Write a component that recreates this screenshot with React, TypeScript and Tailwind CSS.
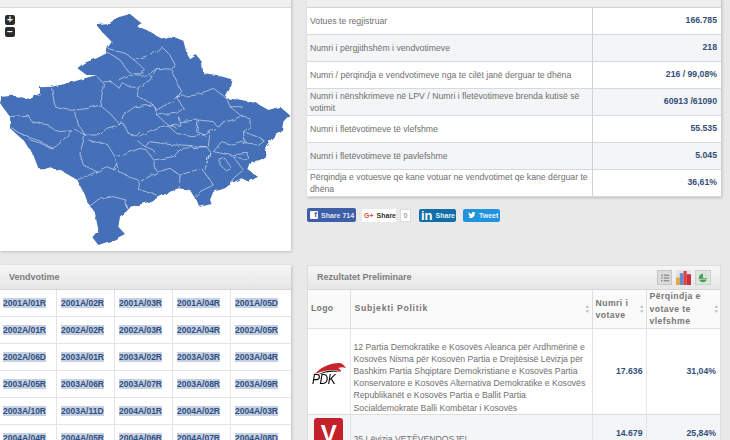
import React from 'react';

const summary = [
  ['Votues te regjistruar', '166.785'],
  ['Numri i përgjithshëm i vendvotimeve', '218'],
  ['Numri / përqindja e vendvotimeve nga te cilët janë derguar te dhëna', '216 / 99,08%'],
  ['Numri i nënshkrimeve në LPV / Numri i fletëvotimeve brenda kutisë së votimit', '60913 /61090'],
  ['Numri i fletëvotimeve të vlefshme', '55.535'],
  ['Numri i fletëvotimeve të pavlefshme', '5.045'],
  ['Përqindja e votuesve qe kane votuar ne vendvotimet qe kane dërguar te dhëna', '36,61%'],
];

const stations = [
  ['2001A/01R', '2001A/02R', '2001A/03R', '2001A/04R', '2001A/05D'],
  ['2002A/01R', '2002A/02R', '2002A/03R', '2002A/04R', '2002A/05R'],
  ['2002A/06D', '2003A/01R', '2003A/02R', '2003A/03R', '2003A/04R'],
  ['2003A/05R', '2003A/06R', '2003A/07R', '2003A/08R', '2003A/09R'],
  ['2003A/10R', '2003A/11D', '2004A/01R', '2004A/02R', '2004A/03R'],
  ['2004A/04R', '2004A/05R', '2004A/06R', '2004A/07R', '2004A/08D'],
];

const outline =
  '287,73 330,68 355,52 390,42 405,55 425,70 410,78 440,90 470,108 490,118 520,110 550,122 560,160 570,178 590,165 605,185 610,220 650,225 694,238 688,270 676,295 725,300 770,310 805,330 840,320 868,345 850,365 845,395 820,410 795,440 800,465 780,480 755,485 745,510 775,530 745,545 725,535 695,550 675,565 640,575 630,600 635,612 600,620 588,600 570,570 535,565 510,575 470,595 435,610 385,622 360,650 355,680 375,702 340,720 295,735 277,712 295,690 285,640 265,610 232,540 180,510 150,505 115,505 100,465 75,425 30,385 30,350 0,310 5,290 40,287 90,297 120,280 120,262 155,260 205,250 255,235 290,225 260,225 232,205 250,190 290,175 320,160 322,145 335,125 310,100';

const borders = [
  '322,145 375,160 400,178 455,165 485,140 510,165 522,190 515,215 530,245 545,275 530,295',
  '322,158 360,180 385,215 420,225 430,205 400,178',
  '355,240 385,225 415,228 440,228 470,205 515,208',
  '470,205 450,240 415,262 412,290 455,310 470,330 515,305 540,280',
  '290,228 310,250 305,295 300,315 265,325 225,330 165,320 155,265',
  '310,245 335,245 358,265 365,250 410,265',
  '300,315 335,345 360,375 370,345 405,320 460,315',
  '225,330 235,375 255,405 300,405 320,385 370,370 385,400 410,408 420,395',
  '30,350 85,345 95,365 145,375 170,395 215,392 185,425 160,445 100,415 60,400 35,385',
  '85,415 130,435 160,448',
  '225,390 255,405 240,460 250,495 290,515 320,500 345,510',
  '265,420 300,430 320,430 345,470 350,490 340,510',
  '345,470 370,465 420,445 440,450 460,480 470,515',
  '350,490 355,515 420,545 475,515 510,505 540,525 605,505',
  '232,540 290,515',
  '420,545 415,568 470,585',
  '265,622 295,598 340,590 378,600 380,625',
  '540,525 538,565',
  '605,505 640,555 600,575 585,590',
  '460,480 520,470 545,445 620,440 630,455 620,490 605,505',
  '415,425 435,440 450,425 520,435 545,435 620,440',
  '435,440 460,450 465,460',
  '415,410 465,385 505,375 470,345 465,320',
  '470,345 530,340 550,325 530,290',
  '535,350 540,375 505,378 530,400 575,410 615,405 630,395 645,385',
  '540,365 595,360 640,365 650,378 720,350',
  '530,290 590,285 640,265 680,295 690,320 720,345 750,355 750,380 730,395 735,425 700,435 665,425 640,455',
  '595,360 590,395 615,405',
  '630,395 625,440',
  '690,320 725,320',
  '730,395 770,410 790,420 770,435 735,425',
  '640,455 690,465 745,460 745,480 700,470',
  '700,470 730,510 700,535 695,550',
  '660,480 675,475 695,505 680,512 660,495 660,480',
  '630,455 615,510',
  '510,375 530,385',
];

const KosovoMap = () => (
  <svg viewBox="0 0 900 780" className="w-[300px] h-[260px] shrink-0">
    <defs>
      <filter id="rough" x="-5%" y="-5%" width="110%" height="110%">
        <feTurbulence type="fractalNoise" baseFrequency="0.045" numOctaves="2" seed="4" />
        <feDisplacementMap in="SourceGraphic" scale="13" />
      </filter>
    </defs>
    <g filter="url(#rough)">
      <polygon points={outline} fill="#4470b8" />
      {borders.map((line, i) => (
        <polyline key={i} points={line} fill="none" stroke="#d3dff3" strokeWidth="2" strokeLinejoin="round" />
      ))}
    </g>
  </svg>
);

const ShareButtons = () => (
  <div className="flex items-center h-[14px] mt-[11px] text-[7px] font-bold leading-none">
    <div className="flex items-center w-[49px] h-[14px] bg-[#3f5ea8] text-[#dfe6f5] rounded-[2px] pl-[3px] gap-[3px]">
      <span className="flex items-end justify-end w-[8px] h-[8px] bg-white text-[#3f5ea8] text-[8px] rounded-[1px] pr-[1px]">f</span>
      <span className="whitespace-nowrap">Share 714</span>
    </div>
    <div className="flex items-center w-[34px] h-[13px] bg-white text-[#333333] ml-[6px] pl-[2px] gap-[3px]">
      <span className="text-[#d9503f]">G+</span>
      <span>Share</span>
    </div>
    <div className="flex items-center justify-center w-[11px] h-[13px] bg-white border border-[#dddddd] text-[#777777] font-normal ml-[4px]">0</div>
    <div className="flex items-center w-[37px] h-[13px] bg-[#0f6fa6] text-[#e6f2f8] rounded-[2px] ml-[8px] pl-[2px] gap-[3px]">
      <span className="text-[13px] text-white font-bold">in</span>
      <span>Share</span>
    </div>
    <div className="flex items-center w-[37px] h-[13px] bg-[#2093dc] text-[#e6f5fd] rounded-[2px] ml-[7px] pl-[5px] gap-[3px]">
      <svg viewBox="0 0 24 24" className="w-[8px] h-[8px]" fill="white">
        <path d="M23 5c-.8.4-1.7.6-2.6.7.9-.6 1.6-1.4 2-2.5-.9.5-1.9.9-2.9 1.1A4.6 4.6 0 0 0 11.6 8.5C7.8 8.300 4.400 6.500 2.100 3.700c-1.200 2.100-.6 4.800 1.400 6.100-.7 0-1.400-.2-2-.6 0 2.200 1.600 4.100 3.700 4.600-.7.2-1.400.2-2.100.1.600 1.900 2.300 3.200 4.300 3.200A9.300 9.300 0 0 1 .5 19a13 13 0 0 0 20-11.600c.9-.6 1.700-1.400 2.500-2.400z" />
      </svg>
      <span>Tweet</span>
    </div>
  </div>
);

const ViewIcons = () => (
  <div className="flex items-center gap-[4px] mr-[9px]">
    <div className="flex items-center justify-center w-[15px] h-[15px] bg-[#dcdcdc] border border-[#c4c4c4]">
      <svg viewBox="0 0 12 10" className="w-[10px] h-[8px]" stroke="#4f5f4f" strokeWidth="1">
        <path d="M1 1.500h2M1 5h2M1 8.500h2M4.500 1.500h7M4.500 5h7M4.500 8.500h7" />
      </svg>
    </div>
    <div className="flex items-center justify-center w-[15px] h-[15px] bg-[#e4e4e4]">
      <svg viewBox="0 0 14 13" className="w-[15px] h-[14px]">
        <rect x="0" y="6" width="3.500" height="7" fill="#e5a93f" />
        <rect x="3.500" y="2" width="3.500" height="11" fill="#5f8fd0" />
        <rect x="7" y="0" width="3" height="13" fill="#e0413f" />
        <rect x="10" y="3" width="4" height="10" fill="#c9303a" />
      </svg>
    </div>
    <div className="flex items-center justify-center w-[16px] h-[15px] bg-[#dce6dc] border border-[#c6d2c6]">
      <svg viewBox="0 0 12 12" className="w-[10px] h-[10px]">
        <circle cx="6" cy="6" r="5" fill="#4f9a5b" />
        <path d="M6 6V1a5 5 0 0 1 5 5z" fill="#d8e8d8" />
        <path d="M1 7.500h10" stroke="#d8e8d8" strokeWidth="1" />
      </svg>
    </div>
  </div>
);

const PdkLogo = () => (
  <div className="relative w-[34px] h-[24px] mx-auto">
    <svg viewBox="0 0 34 14" className="absolute left-0 top-0 w-[34px] h-[14px]">
      <path d="M3 12C9 5 18 1 27 1c3 0 5 2 7 5-3-1-5-1-8 0 2 1 3 2 3 4-5-3-14-3-26 2z" fill="#c8222c" />
      <path d="M5 13c7-4 15-6 23-3-8-1-15 0-23 3z" fill="#222222" />
    </svg>
    <span className="absolute left-0 top-[9px] text-[15px] leading-[15px] italic text-black scale-x-[.8] origin-left tracking-[-0.5px]">PDK</span>
  </div>
);

export default function App() {
  return (
    <div className="w-[730px] h-[440px] overflow-hidden bg-[#e9e9ea] font-['Liberation_Sans',Arial,sans-serif] text-[8.7px] text-[#707070]">
      <div className="flex items-start gap-[16px] w-[730px] -mt-[20px]">
        <div className="w-[291px] shrink-0">
          <div className="bg-white shadow-[1px_1px_3px_rgba(0,0,0,0.18)]">
            <div className="h-[28px] bg-[#efefef] border-b border-[#d8d8d8]" />
            <div className="relative h-[243px] overflow-hidden">
              <div className="-mt-[8px]">
                <KosovoMap />
              </div>
              <div className="absolute left-[5px] top-[7px] flex flex-col gap-[2px]">
                <div className="flex items-center justify-center w-[10px] h-[10px] bg-[#2b2b2b] text-white rounded-[2px] text-[10px] font-bold leading-none">+</div>
                <div className="flex items-center justify-center w-[10px] h-[10px] bg-[#2b2b2b] text-white rounded-[2px] text-[10px] font-bold leading-none">−</div>
              </div>
            </div>
          </div>

          <div className="bg-white mt-[14px] shadow-[1px_1px_3px_rgba(0,0,0,0.18)]">
            <div className="flex items-center h-[25px] pl-[9px] pt-[1px] bg-gradient-to-b from-[#f6f6f6] to-[#e6e6e6] border-b border-[#d6d6d6] text-[9px] font-bold text-[#7d7d7d]">Vendvotime</div>
            <div className="grid grid-cols-[57px_58px_58px_58px_60px]">
              {stations.flat().map((code, i) => (
                <div key={code} className={`flex items-center h-[27px] border-b border-[#e2e4e8] ${i % 5 === 0 ? 'pl-[3px]' : 'pl-[4px]'} ${i % 5 === 4 ? '' : 'border-r'}`}>
                  <span className="bg-[#c5d0e2] text-[#2f4f7f] font-bold text-[8.5px] leading-[10px]">{code}</span>
                </div>
              ))}
            </div>
          </div>
        </div>

        <div className="w-[414px] shrink-0">
          <div className="bg-white shadow-[1px_1px_3px_rgba(0,0,0,0.2)]">
            <div className="h-[28px] bg-[#efefef] border-b border-[#d0d4d8]" />
            {summary.map(([label, value], i) => (
              <div key={label} className={`flex h-[27px] border-b border-[#d5dae0] ${i % 2 === 1 ? 'bg-[#f3f5f7]' : 'bg-white'}`}>
                <div className="flex items-center w-[286px] pl-[3px] pr-[1px] border-r border-[#cdd3da] leading-[12px]">{label}</div>
                <div className="flex items-center justify-end flex-1 pr-[4px] font-bold text-[#34507a]">{value}</div>
              </div>
            ))}
          </div>

          <ShareButtons />

          <div className="bg-white mt-[43px] border border-[#dddddd]">
            <div className="flex items-center justify-between h-[24px] pl-[9px] bg-gradient-to-b from-[#f6f6f6] to-[#e6e6e6] border-b border-[#d6d6d6] text-[9px] font-bold text-[#7d7d7d]">
              <span>Rezultatet Preliminare</span>
              <ViewIcons />
            </div>
            <table className="w-[412px] table-fixed border-collapse">
              <colgroup>
                <col className="w-[42px]" />
                <col className="w-[242px]" />
                <col className="w-[54px]" />
                <col className="w-[74px]" />
              </colgroup>
              <thead>
                <tr className="h-[38px] text-left text-[#777777] bg-[#fafafa] border-b border-[#e0e0e0]">
                  <th className="pl-[3px] font-bold tracking-[0.3px] border-r border-[#dddddd]">Logo</th>
                  <th className="relative pl-[4px] font-bold tracking-[0.7px] border-r border-[#dddddd]">Subjekti Politik<span className="absolute right-[1px] top-[14px] text-[5px] leading-[5px] text-[#bbbbbb]">▲<br />▼</span></th>
                  <th className="relative pl-[3px] pr-[10px] font-bold tracking-[0.4px] leading-[12px] border-r border-[#dddddd]">Numri i votave<span className="absolute right-[1px] top-[14px] text-[5px] leading-[5px] text-[#bbbbbb]">▲<br />▼</span></th>
                  <th className="relative pl-[3px] pr-[12px] font-bold tracking-[0.4px] leading-[12.2px]">Përqindja e votave te vlefshme<span className="absolute right-[1px] top-[14px] text-[5px] leading-[5px] text-[#bbbbbb]">▲<br />▼</span></th>
                </tr>
              </thead>
              <tbody>
                <tr className="h-[86px] border-b border-[#dddddd]">
                  <td className="pt-[6px] border-r border-[#e4e4e4]"><PdkLogo /></td>
                  <td className="pl-[3px] pr-[2px] pt-[12px] leading-[12.2px] align-top border-r border-[#e4e4e4]">12 Partia Demokratike e Kosovës Aleanca për Ardhmërinë e Kosovës Nisma për Kosovën Partia e Drejtësisë Lëvizja për Bashkim Partia Shqiptare Demokristiane e Kosovës Partia Konservatore e Kosovës Alternativa Demokratike e Kosovës Republikanët e Kosovës Partia e Ballit Partia Socialdemokrate Balli Kombëtar i Kosovës</td>
                  <td className="pr-[3px] text-right font-bold text-[#34507a] border-r border-[#e4e4e4]">17.636</td>
                  <td className="pr-[4px] text-right font-bold text-[#34507a]">31,04%</td>
                </tr>
                <tr className="h-[38px] bg-[#f3f5f7]">
                  <td className="border-r border-[#e4e4e4]">
                    <div className="flex items-center justify-center w-[29px] h-[30px] mx-auto pt-[2px] bg-[#c3202c] rounded-[3px] text-white text-[24px] font-bold leading-none">V</div>
                  </td>
                  <td className="px-[3px] pt-[12px] border-r border-[#e4e4e4]">35 Lëvizja VETËVENDOSJE!</td>
                  <td className="pr-[3px] text-right font-bold text-[#34507a] border-r border-[#e4e4e4]">14.679</td>
                  <td className="pr-[4px] text-right font-bold text-[#34507a]">25,84%</td>
                </tr>
              </tbody>
            </table>
          </div>
        </div>
      </div>
    </div>
  );
}
